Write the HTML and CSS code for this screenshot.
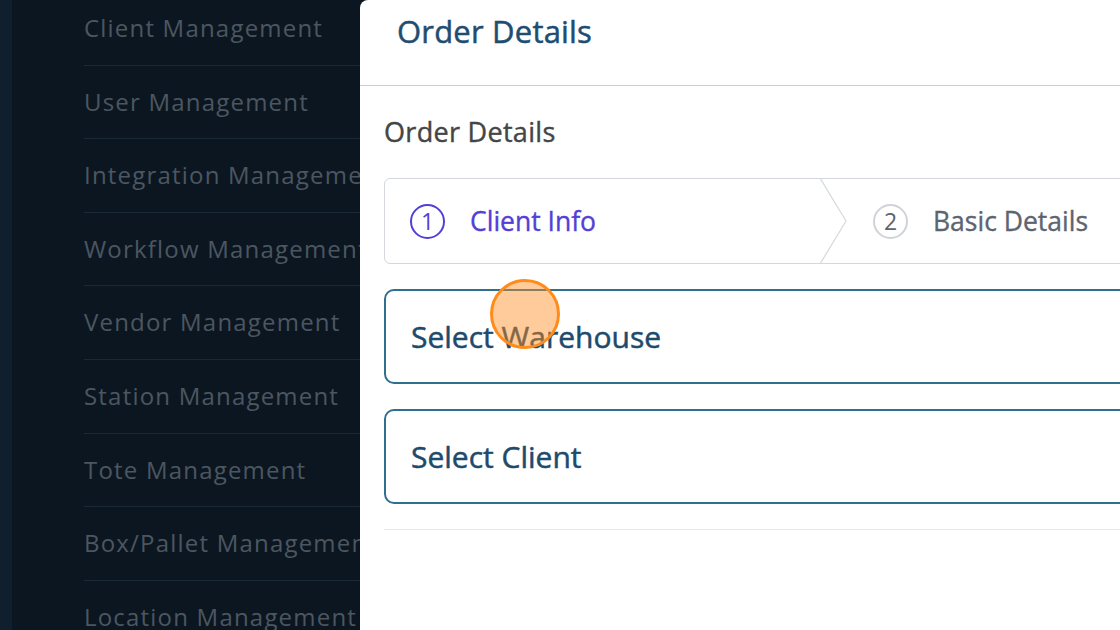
FILE: index.html
```html
<!DOCTYPE html>
<html lang="en">
<head>
    <meta charset="UTF-8">
    <meta name="viewport" content="width=device-width, initial-scale=1.0">
    <title>Order Details</title>
    <link rel="stylesheet" href="styles.css">
</head>
<body>
    <div class="app">
        <!-- Left rail -->
        <div class="rail"></div>

        <!-- Sidebar menu -->
        <nav class="sidebar">
            <ul class="menu">
                <li>Client Management</li>
                <li>User Management</li>
                <li>Integration Management</li>
                <li>Workflow Management</li>
                <li>Vendor Management</li>
                <li>Station Management</li>
                <li>Tote Management</li>
                <li>Box/Pallet Management</li>
                <li>Location Management</li>
            </ul>
        </nav>

        <!-- Order drawer -->
        <section class="drawer">
            <header class="drawer-header">
                <h1>Order Details</h1>
            </header>

            <div class="drawer-body">
                <h2>Order Details</h2>

                <div class="stepper">
                    <div class="step step-active">
                        <span class="step-num">1</span>
                        <span class="step-label">Client Info</span>
                    </div>
                    <svg class="step-arrow" width="28" height="86" viewBox="0 0 28 86">
                        <polyline points="0,0 26,43 0,86" fill="none" stroke="#d6d9dd" stroke-width="1.2"/>
                    </svg>
                    <div class="step">
                        <span class="step-num">2</span>
                        <span class="step-label">Basic Details</span>
                    </div>
                </div>

                <div class="select-box">Select Warehouse</div>
                <div class="select-box">Select Client</div>

                <div class="divider"></div>
            </div>

            <!-- click marker -->
            <span class="click-dot"></span>
        </section>
    </div>
</body>
</html>
```

FILE: styles.css
```css
/* Base */
body {
    margin: 0;
    padding: 0;
    font-family: 'Open Sans', 'Liberation Sans', sans-serif;
    background-color: #0c1620;
    overflow: hidden;
}

.app {
    display: flex;
    height: 630px;
    width: 1120px;
    overflow: hidden;
}

/* Left rail */
.rail {
    width: 12px;
    flex-shrink: 0;
    background-color: #0f1f2d;
}

/* Sidebar */
.sidebar {
    width: 348px;
    flex-shrink: 0;
    overflow: hidden;
    background-color: #0c1620;
}

.menu {
    list-style: none;
    margin: -8px 0 0 72px;
    padding: 0;
}

.menu li {
    height: 72.6px;
    line-height: 72.6px;
    border-bottom: 1px solid #172a36;
    color: #4b5661;
    font-size: 24px;
    letter-spacing: 1.2px;
    white-space: nowrap;
}

/* Drawer */
.drawer {
    position: relative;
    width: 1000px;
    flex-shrink: 0;
    background-color: white;
    border-top-left-radius: 8px;
}

.drawer-header {
    height: 86px;
    border-bottom: 1px solid #c8cfd5;
    box-sizing: border-box;
}

.drawer-header h1 {
    margin: 0;
    padding: 10px 0 0 37px;
    font-size: 31px;
    font-weight: 400;
    letter-spacing: 0.2px;
    color: #1f4d72;
    -webkit-text-stroke: 0.5px #1f4d72;
}

.drawer-body {
    padding: 27px 0 0 24px;
}

.drawer-body h2 {
    margin: 0 0 28px;
    font-size: 27px;
    font-weight: 400;
    letter-spacing: 0.3px;
    color: #454545;
    -webkit-text-stroke: 0.4px #454545;
}

/* Stepper */
.stepper {
    display: flex;
    align-items: center;
    height: 86px;
    border: 1px solid #d4d8dc;
    border-radius: 6px;
    box-sizing: border-box;
    margin-bottom: 25px;
}

.step {
    display: flex;
    align-items: center;
    gap: 25px;
    padding-left: 25px;
    color: #5d6470;
    font-size: 26.5px;
    font-weight: 400;
    -webkit-text-stroke: 0.35px #5d6470;
}

.step-active {
    width: 410px;
    color: #5240d6;
    -webkit-text-stroke-color: #5240d6;
}

.step-arrow {
    flex-shrink: 0;
}

.step-num {
    display: flex;
    align-items: center;
    justify-content: center;
    width: 35px;
    height: 35px;
    box-sizing: border-box;
    border: 2px solid #cfd3d8;
    border-radius: 50%;
    font-size: 23px;
    -webkit-text-stroke: 0;
}

.step-active .step-num {
    border-color: #5240d6;
}

/* Select boxes */
.select-box {
    height: 95px;
    box-sizing: border-box;
    display: flex;
    align-items: center;
    padding-left: 25px;
    margin-bottom: 25px;
    border: 2px solid #2f6f8f;
    border-radius: 10px;
    color: #1e4a6b;
    font-size: 30px;
    font-weight: 400;
    -webkit-text-stroke: 0.5px #1e4a6b;
}

.divider {
    border-top: 1px solid #e6e6e6;
}

/* Click marker */
.click-dot {
    position: absolute;
    left: 130px;
    top: 279px;
    width: 70px;
    height: 70px;
    box-sizing: border-box;
    border: 3px solid #ff8c1a;
    border-radius: 50%;
    background-color: rgba(255, 140, 30, 0.45);
}
```
